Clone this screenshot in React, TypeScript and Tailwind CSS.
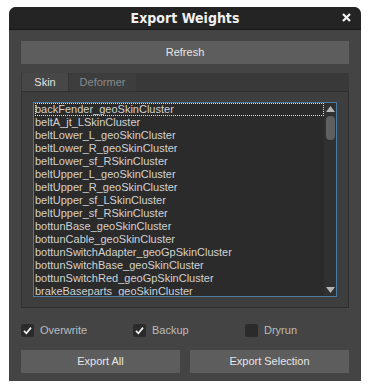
import { useState } from "react";

const clusters = [
  "backFender_geoSkinCluster",
  "beltA_jt_LSkinCluster",
  "beltLower_L_geoSkinCluster",
  "beltLower_R_geoSkinCluster",
  "beltLower_sf_RSkinCluster",
  "beltUpper_L_geoSkinCluster",
  "beltUpper_R_geoSkinCluster",
  "beltUpper_sf_LSkinCluster",
  "beltUpper_sf_RSkinCluster",
  "bottunBase_geoSkinCluster",
  "bottunCable_geoSkinCluster",
  "bottunSwitchAdapter_geoGpSkinCluster",
  "bottunSwitchBase_geoSkinCluster",
  "bottunSwitchRed_geoGpSkinCluster",
  "brakeBaseparts_geoSkinCluster",
];

function CheckBox({ label, checked }: { label: string; checked: boolean }) {
  return (
    <label className="flex items-center gap-[6px]">
      <span className="flex h-[13px] w-[13px] items-center justify-center rounded-[2px] bg-[#2b2b2b]">
        {checked && (
          <svg width="11" height="11" viewBox="0 0 11 11">
            <path d="M2 5.8 L4.4 8.3 L9 2.6" fill="none" stroke="#f2f2f2" strokeWidth="1.7" />
          </svg>
        )}
      </span>
      <span className="text-[11px] text-[#bcbcbc]">{label}</span>
    </label>
  );
}

export default function App() {
  const [tab, setTab] = useState<"skin" | "deformer">("skin");

  return (
    <div className="h-[390px] w-[370px] bg-white pl-[9px] pt-[7px] font-['Liberation_Sans',Arial,sans-serif]">
      <div className="flex h-[374px] w-[352px] flex-col rounded-t-[7px] bg-[#444444]">
        <div className="relative flex h-[23px] items-center justify-center rounded-t-[7px] border-b border-[#161616] bg-[#242424]">
          <span className="font-['DejaVu_Sans_Condensed','DejaVu_Sans',sans-serif] text-[14px] font-bold text-[#f0f0f0]">
            Export Weights
          </span>
          <span className="absolute right-[9px] top-[5px]">
            <svg width="11" height="11" viewBox="0 0 11 11">
              <path d="M2 2 L9 9 M9 2 L2 9" stroke="#f4f4f4" strokeWidth="2.2" />
            </svg>
          </span>
        </div>

        <div className="flex flex-1 flex-col px-[12px] pt-[11px]">
          <button className="h-[23px] w-full bg-[#5d5d5d] text-[11px] text-[#e6e6e6]">Refresh</button>

          <div className="mt-[9px] flex h-[18px] bg-[#393939] pl-px">
            <button
              onClick={() => setTab("skin")}
              className={`w-[46px] rounded-t-[2px] text-[11px] ${tab === "skin" ? "bg-[#474747] text-[#e2e2e2]" : "bg-[#3d3d3d] text-[#8a8a8a]"}`}
            >
              Skin
            </button>
            <button
              onClick={() => setTab("deformer")}
              className={`w-[68px] rounded-t-[2px] border-l border-[#333333] text-[11px] ${tab === "deformer" ? "bg-[#474747] text-[#e2e2e2]" : "bg-[#3d3d3d] text-[#8a8a8a]"}`}
            >
              Deformer
            </button>
          </div>

          <div className="h-[217px] border border-[#2f2f2f] bg-[#3e3e3e] px-[11px] pt-[10px]">
            <div className="flex h-[195px] border border-[#4b7ba3] bg-[#2b2b2b]">
              <ul className="flex-1 overflow-hidden pl-px text-[11px] leading-[13px] text-[#d2d2d2]">
                {clusters.map((name, i) => (
                  <li
                    key={name}
                    className={`h-[13px] whitespace-nowrap ${i === 0 ? "outline-1 -outline-offset-1 outline-dotted outline-[#dddddd]" : ""}`}
                  >
                    {name}
                  </li>
                ))}
              </ul>
              <div className="flex w-[12px] flex-col items-center bg-[#303030] py-[3px]">
                <svg width="9" height="6" viewBox="0 0 9 6">
                  <path d="M0 6 L4.5 0 L9 6 Z" fill="#b4b4b4" />
                </svg>
                <div className="mt-[4px] h-[24px] w-[9px] rounded-[4px] bg-[#5f5f5f]" />
                <div className="flex-1" />
                <svg width="9" height="6" viewBox="0 0 9 6">
                  <path d="M0 0 L9 0 L4.5 6 Z" fill="#b4b4b4" />
                </svg>
              </div>
            </div>
          </div>

          <div className="mt-[14px] grid grid-cols-3 gap-2">
            <CheckBox label="Overwrite" checked />
            <CheckBox label="Backup" checked />
            <CheckBox label="Dryrun" checked={false} />
          </div>

          <div className="mt-[11px] grid grid-cols-2 gap-[10px]">
            <button className="h-[23px] bg-[#5d5d5d] text-[11px] text-[#e6e6e6]">Export All</button>
            <button className="h-[23px] bg-[#5d5d5d] text-[11px] text-[#e6e6e6]">Export Selection</button>
          </div>
        </div>
      </div>
    </div>
  );
}
